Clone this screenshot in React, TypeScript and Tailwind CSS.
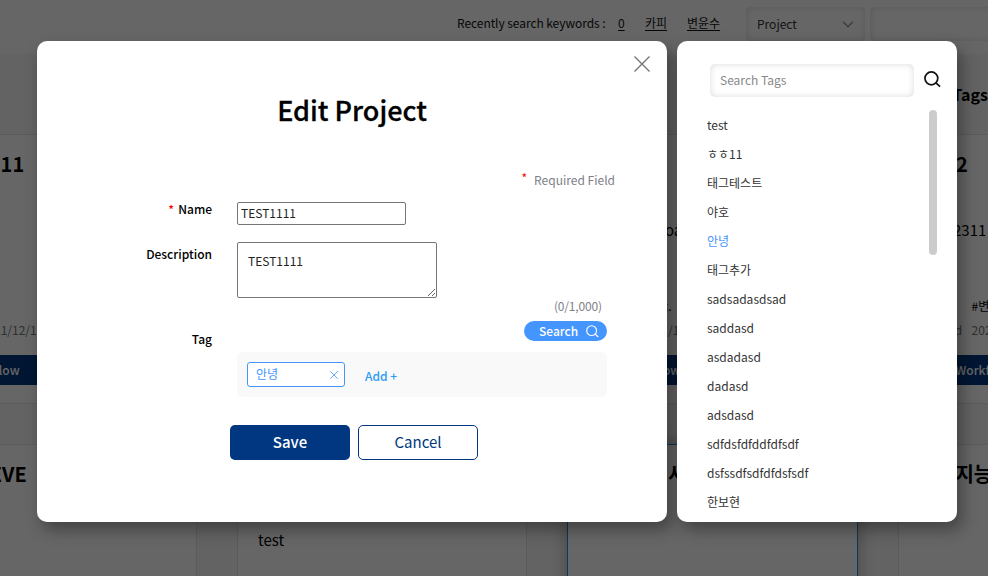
import React from "react";

const tags = [
  "test", "ㅎㅎ11", "태그테스트", "야호", "안녕", "태그추가", "sadsadasdsad", "saddasd",
  "asdadasd", "dadasd", "adsdasd", "sdfdsfdfddfdfsdf", "dsfssdfsdfdfdsfsdf", "한보현",
];

type CardProps = {
  title: React.ReactNode;
  description?: React.ReactNode;
  tag?: string;
  active?: boolean;
};

function ProjectCard({ title, description, tag, active }: CardProps) {
  return (
    <section
      className={`h-[270px] shrink-0 overflow-hidden border bg-white ${
        active ? "-mr-px w-[291px] border-[#1c8ce8] shadow-[0_0_16px_rgba(0,0,0,0.3)]" : "w-[290px] border-[#e4e4e4]"
      }`}
    >
      <h3 className="mt-[13px] ml-5 h-8 text-xl leading-8 font-bold whitespace-nowrap">{title}</h3>
      <p className="mt-[38px] ml-5 h-6 text-[15px] leading-6 whitespace-nowrap">{description}</p>
      <dl className="mt-[52px] ml-5 grid grid-cols-[53px_1fr] text-xs leading-6 whitespace-nowrap">
        <dt className="text-[#777]">Tag</dt>
        <dd>{tag}</dd>
        <dt className="text-[#777]">Created</dt>
        <dd className="text-[#777]">2021/12/14</dd>
      </dl>
      <div className="mt-[13px] flex h-[30px] items-center bg-[#003780] pl-[57px] text-xs font-medium text-white">
        Workflow
      </div>
    </section>
  );
}

function MagnifierIcon({ className }: { className: string }) {
  return (
    <svg viewBox="0 0 18 18" fill="none" stroke="currentColor" className={className}>
      <circle cx="7.8" cy="7.8" r="6.8" />
      <path d="M12.6 12.6 17 16.6" />
    </svg>
  );
}

function CrossIcon({ className }: { className: string }) {
  return (
    <svg viewBox="0 0 16 16" fill="none" stroke="currentColor" className={className}>
      <path d="M.5.5l15 15M15.5.5l-15 15" />
    </svg>
  );
}

function ProjectsPage() {
  return (
    <div className="h-full overflow-hidden bg-[#f8f8f8]">
      <header className="flex h-[54px] items-start bg-white pl-[457px] text-xs text-[#111]">
        <div className="mt-[13px] flex h-5 w-[289px] shrink-0 items-center leading-5 whitespace-nowrap">
          <span className="w-[161px] tracking-[-0.06px]">Recently search keywords :</span>
          <span className="w-[27px] underline underline-offset-2">0</span>
          <span className="w-[42px] underline underline-offset-2">카피</span>
          <span className="underline underline-offset-2">변윤수</span>
        </div>
        <div className="mt-[7px] flex h-[34px] w-[119px] shrink-0 items-center justify-between rounded bg-white pr-[11px] pl-[11px] text-[#333] shadow-[inset_0_0_7px_rgba(0,0,0,0.14)]">
          Project
          <svg viewBox="0 0 12 7" fill="none" stroke="#999" className="h-[7px] w-3 stroke-[1.3]">
            <path d="M1 .8l5 5 5-5" />
          </svg>
        </div>
        <div className="mt-[7px] ml-[5px] h-[34px] w-[205px] shrink-0 rounded bg-white shadow-[inset_0_0_7px_rgba(0,0,0,0.14)]" />
      </header>
      <div className="flex h-20 items-center justify-end">
        <span className="text-base font-bold">Tags</span>
      </div>
      <main className="-ml-[93.3px] flex flex-col gap-10">
        <div className="flex gap-[40.3px]">
          <ProjectCard title={<span className="inline-block w-[95px] text-right">TEST1111</span>} />
          <ProjectCard title="test" />
          <ProjectCard
            title="sample"
            description={<span className="inline-block w-[94px] text-right">test downloa</span>}
            tag="#abc."
          />
          <ProjectCard
            title={<span className="inline-block w-[48px] text-right">test2</span>}
            description={<span className="inline-block w-[67px] text-right">test12311</span>}
            tag="#변윤수"
          />
        </div>
        <div className="flex gap-[40.3px]">
          <ProjectCard title={<span className="inline-block w-[99px] text-right">RETRIEVE</span>} />
          <ProjectCard title="test" description="test" />
          <ProjectCard active title={<span className="inline-block w-[98px] text-right">프로젝트 사</span>} />
          <ProjectCard title="인공지능" />
        </div>
      </main>
    </div>
  );
}

function EditDialog() {
  return (
    <section className="h-[481px] w-[630px] shrink-0 rounded-[10px] bg-white shadow-[5px_8px_16px_rgba(0,0,0,0.35)]">
      <div className="flex justify-end pt-[15px] pr-[17px]">
        <CrossIcon className="size-4 stroke-[1.4] text-[#75757c]" />
      </div>
      <h2 className="mt-[17px] text-center text-[27px] leading-[42px] font-medium [-webkit-text-stroke:0.3px_black]">
        Edit Project
      </h2>
      <p className="mt-[39px] flex justify-end pr-[52px] text-xs leading-5 text-[#808088]">
        <span className="mr-[7px] -mt-[2px] h-5 text-[#f00]">*</span>Required Field
      </p>
      <div className="mt-3 flex h-10">
        <label className="w-[175px] text-right text-xs leading-[14px] font-medium">
          <span className="mr-1 text-[#f00]">*</span>Name
        </label>
        <input
          readOnly
          value="TEST1111"
          className="ml-[25px] h-[23px] w-[169px] rounded-[2px] border border-[#767676] px-[3px] pb-[2px] text-xs text-[#222]"
        />
      </div>
      <div className="flex h-14">
        <label className="w-[175px] pt-[2px] text-right text-xs leading-5 font-medium">Description</label>
        <textarea
          readOnly
          value="TEST1111"
          className="ml-[25px] h-14 w-[200px] resize rounded-[2px] border border-[#767676] px-[10px] py-[8px] text-xs leading-5 text-[#222]"
        />
      </div>
      <p className="-mt-[2px] pr-[65px] text-right text-xs leading-5 tracking-[-0.15px] text-[#808088]">(0/1,000)</p>
      <div className="mt-[5px] flex">
        <span className="w-[175px] pt-2 text-right text-xs leading-5 font-medium">Tag</span>
        <div className="ml-[25px] flex w-[370px] flex-col items-end">
          <button className="flex h-5 w-[83px] items-center rounded-full bg-[#4595ff] pl-[15px] text-xs font-medium text-white">
            Search
            <MagnifierIcon className="ml-2 size-[13px] stroke-[1.6]" />
          </button>
          <div className="mt-[11px] flex h-[45px] w-full rounded-md bg-[#f9f9f9] pt-[10px] pl-[10px] text-[#4595ff]">
            <div className="flex h-[25px] w-[98px] items-center justify-between rounded-[3px] border border-[#4595ff] bg-white pr-[6px] pl-2 text-xs">
              <span className="pb-[2px]">안녕</span>
              <CrossIcon className="size-2 stroke-[1.6]" />
            </div>
            <button className="ml-5 h-7 text-xs font-medium text-[#2d9bf5]">Add +</button>
          </div>
        </div>
      </div>
      <div className="mt-7 ml-[193px] flex gap-2 text-[15px]">
        <button className="h-[35px] w-[120px] rounded-[5px] bg-[#003780] pb-px font-medium text-white">Save</button>
        <button className="h-[35px] w-[120px] rounded-[5px] border border-[#003780] bg-white pb-px text-[#003780]">Cancel</button>
      </div>
    </section>
  );
}

function TagsDialog() {
  return (
    <section className="h-[481px] w-[280px] shrink-0 overflow-hidden rounded-[10px] bg-white pt-[23px] pl-[30px] text-xs shadow-[5px_8px_16px_rgba(0,0,0,0.35)]">
      <div className="flex items-center pl-[3px]">
        <div className="flex h-[33px] w-[204px] items-center rounded-[5px] pb-[2px] pl-[10px] text-[#888] shadow-[inset_0_0_7px_rgba(0,0,0,0.14)]">
          Search Tags
        </div>
        <MagnifierIcon className="ml-[9.5px] -mt-[2px] size-[17px] stroke-[1.8] text-[#111]" />
      </div>
      <div className="mt-[13px] flex justify-between pr-5">
        <ul className="text-[#333]">
          {tags.map((tag) => (
            <li key={tag} className={`h-[29px] leading-[29px] ${tag === "안녕" ? "text-[#4595ff]" : ""}`}>
              {tag}
            </li>
          ))}
        </ul>
        <div className="h-[145px] w-2 rounded-full bg-[#ccc]" />
      </div>
    </section>
  );
}

export default function App() {
  return (
    <div className="relative h-[576px] w-[988px] overflow-hidden font-['Noto_Sans_CJK_KR','Noto_Sans',sans-serif] text-black">
      <ProjectsPage />
      <div className="absolute inset-0 flex gap-[10px] bg-black/60 pt-[41px] pl-[37px]">
        <EditDialog />
        <TagsDialog />
      </div>
    </div>
  );
}
